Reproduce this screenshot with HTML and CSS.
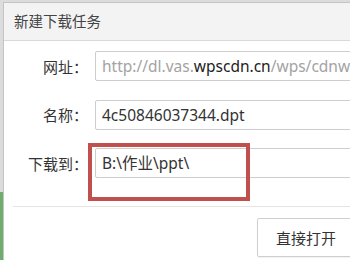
FILE: index.html
```html
<!DOCTYPE html>
<html lang="zh-CN">

<head>
	<meta charset="UTF-8">
	<title>新建下载任务</title>
	<link rel="stylesheet" href="styles.css">
</head>

<body>
	<div class="dialog">
		<div class="title">新建下载任务</div>

		<div class="form">
			<label class="label">网址：</label>
			<div class="field url">http://dl.vas.<b>wpscdn.cn</b>/wps/cdnw</div>

			<label class="label">名称：</label>
			<div class="field">4c50846037344.dpt</div>

			<label class="label">下载到：</label>
			<div class="field">B:\作业\ppt\</div>
		</div>

		<div class="footer">
			<button class="btn">直接打开</button>
		</div>

		<div class="mark"></div>
	</div>
</body>

</html>
```

FILE: styles.css
```css
* {
	box-sizing: border-box;
}

body {
	margin: 0;
	width: 350px;
	height: 260px;
	overflow: hidden;
	background: linear-gradient(180deg, #dcdcdc 0, #dcdcdc 192px, #6fae6a 192px);
	font-family: "Noto Sans", "Noto Sans CJK SC", sans-serif;
}

.dialog {
	position: relative;
	width: 460px;
	height: 300px;
	margin: 2px 0 0 3px;
	background: #fff;
	border: 1px solid #c4c4c4;
}

.title {
	height: 38px;
	padding-left: 10px;
	line-height: 37px;
	font-size: 14.5px;
	color: #444;
	background: #f3f3f3;
	border-bottom: 1px solid #d9d9d9;
}

.form {
	display: grid;
	grid-template-columns: 84px 1fr;
	column-gap: 7px;
	row-gap: 18.5px;
	padding-top: 10px;
	align-items: center;
}

.label {
	text-align: right;
	font-family: "Noto Sans CJK TC", sans-serif;
	font-size: 15px;
	color: #333;
}

.field {
	width: 300px;
	height: 30px;
	padding-left: 6px;
	line-height: 28px;
	font-size: 15.5px;
	color: #333;
	white-space: nowrap;
	overflow: hidden;
	border: 1px solid #cdcdcd;
	border-radius: 2px;
}

.url {
	color: #a3a3a3;
}

.url b {
	font-weight: normal;
	color: #222;
}

.footer {
	display: flex;
	margin: 28px 0 0 9px;
	padding: 11px 0 0 244px;
	border-top: 1px solid #e4e4e4;
}

.btn {
	width: 98px;
	height: 39px;
	flex: none;
	font-family: inherit;
	font-size: 15px;
	color: #333;
	background: #fff;
	border: 1px solid #cfcfcf;
	border-radius: 2px;
	box-shadow: 0 1px 1px rgba(0, 0, 0, 0.06);
}

/* red annotation box */
.mark {
	position: absolute;
	left: 84px;
	top: 140px;
	width: 162px;
	height: 58px;
	border: 4px solid #c0504d;
}
```
